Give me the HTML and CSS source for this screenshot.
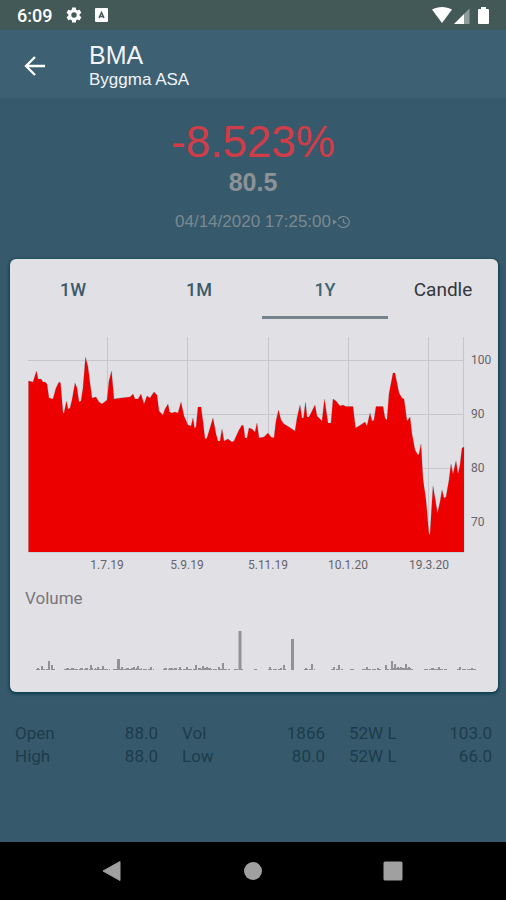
FILE: index.html
```html
<!DOCTYPE html>
<html lang="en">
<head>
<meta charset="utf-8">
<meta name="viewport" content="width=device-width, initial-scale=1">
<title>BMA</title>
<link rel="stylesheet" href="styles.css">
</head>
<body>
<div class="status">
  <div class="status-group">
    <span class="clock">6:09</span>
    <svg class="gear" width="18" height="18" viewBox="0 0 24 24" aria-hidden="true"><path fill="#fff" d="M19.4 13c.1-.3.1-.6.1-1s0-.7-.1-1l2.1-1.600c.2-.2.2-.4.1-.6l-2-3.500c-.1-.2-.4-.3-.6-.2l-2.500 1c-.5-.4-1.100-.7-1.700-1l-.4-2.600c0-.2-.2-.4-.5-.4h-4c-.2 0-.4.2-.5.4l-.4 2.600c-.6.300-1.200.6-1.700 1l-2.400-1c-.2-.1-.5 0-.6.2l-2 3.500c-.1.2-.1.500.1.6l2.100 1.600c0 .3-.1.700-.1 1s0 .700.1 1l-2.100 1.600c-.2.2-.2.400-.1.6l2 3.500c.1.200.4.300.6.2l2.500-1c.5.400 1.100.700 1.700 1l.4 2.600c0 .2.2.4.5.4h4c.2 0 .5-.2.5-.4l.4-2.600c.6-.3 1.200-.6 1.700-1l2.500 1c.2.100.5 0 .6-.2l2-3.500c.1-.2.100-.5-.1-.6zM12 15.600a3.600 3.600 0 1 1 0-7.200 3.600 3.600 0 0 1 0 7.200z"/></svg>
    <svg width="13" height="14" viewBox="0 0 13 14" aria-hidden="true"><rect width="13" height="14" rx="1" fill="#fff"/><path d="M4 10 6.500 4.500 9 10M5 8.500h3" fill="none" stroke="#435958" stroke-width="1.500"/></svg>
  </div>
  <svg width="60" height="20" viewBox="0 0 60 20" aria-hidden="true">
    <path fill="#fff" d="M1 4.500C7 1 15 1 21 4.500L11 18z"/>
    <path fill="#fff" d="M23 19 33 9v10z"/><path fill="#fff" opacity=".4" d="M33 9l5.500-5.500V19H33z"/>
    <path fill="#fff" d="M50 2h5v2h2q1 0 1 1v13q0 1-1 1h-9q-1 0-1-1V5q0-1 1-1h2z"/>
  </svg>
</div>
<header class="appbar">
  <button class="back" aria-label="Back"><svg width="22" height="22" viewBox="0 0 22 22"><path d="M21 11H2M11 2 2 11l9 9" fill="none" stroke="#fff" stroke-width="2.300"/></svg></button>
  <div>
    <h1>BMA</h1>
    <p class="company">Byggma ASA</p>
  </div>
</header>
<main>
  <section class="quote">
    <div class="change">-8.523%</div>
    <div class="price">80.5</div>
    <div class="time"><span>04/14/2020 17:25:00</span><svg width="20" height="14" viewBox="0 0 20 14" aria-hidden="true"><g fill="none" stroke="currentColor" stroke-width="1.200"><path d="M7 4.500a6 5.500 0 1 1 0 5M12.500 4v3.500l3 1.500"/></g><path fill="currentColor" d="M2 4.500 6 7 2 9.500z"/></svg></div>
  </section>
  <section class="card">
    <nav class="tabs">
      <button class="tab">1W</button>
      <button class="tab">1M</button>
      <button class="tab active">1Y</button>
      <button class="tab candle">Candle</button>
    </nav>
    <svg class="chart" viewBox="10 336 488 236" role="img" aria-label="Price over one year">
      <path d="M28 360.500H464M28 414.500H464M28 468.500H464M28 522.500H464M107.500 337V552M187.500 337V552M268.500 337V552M348.500 337V552M428.500 337V552M463.500 337V552" fill="none" stroke="#c7c7cb"/>
      <path class="area" d="M28.500 552V381L33 382 36.500 371 38 379 41 379 43 382 45 382 47 384 49 398 53 399 56 388 59 382 60.500 383 63 413 64 413 66.500 401 68 409 70 408 72 400 75 383 77 388 79 402 81 401 83 388 85.500 357 88 367 90 383 92 398 96 397 99 402 102 404 107 400 109 381 111.500 371 113 388 114 399 121 398 130 397 133 394 135 399 138 399 141 394 144 404 147 396 150 398 154 392 157 395 159 411 163 415 165 409 168 404 169.500 412 172 413 175 412 178 413 181 402 184 416 188 425 191 426 193 418 194.500 428 196 427 198 407 201 407 203 422 205 439 207 438 213 418 216 434 218 441 220 441 222 429 224 441 228 439 232 442 234 441 239 430 242 425 243.500 426 245 438 247 438 249 428 252 429 255 432 257 423 259 438 264 437 268 433 271 437 274 438 276 421 278.500 410 281 420 284 424 289 427 295 431 297 418 300 405 302 418 303.500 418 305.500 402 307 417 309 417 315 405 317 416 322 421 324.500 399 328 423 331 423 333 399 336 401 340 406 343 405 346 406.500 353 406.500 355.500 428 359 426 365 422 367 426 370 413 372 421 374 420 376 406.500 383 406.500 385 418 387 420 389 394 393 373 395 373 397 383 399 393 402 398 404 399 407 421 410 417 412 434 415 450 418 455 419 454 421 444 423 479 426 500 429 534.500 430 534 433 486 435 498 437.500 513 440 502 442 490 444 498 446 497 449 480 451 464 453 474 456 461 458 474 460 465 462 448 464 447V552Z"/>
      <g class="axis">
        <text x="471" y="364">100</text><text x="471" y="418">90</text><text x="471" y="472">80</text><text x="471" y="526">70</text>
      </g>
      <g class="axis dates">
        <text x="107" y="569">1.7.19</text><text x="187" y="569">5.9.19</text><text x="268" y="569">5.11.19</text><text x="348" y="569">10.1.20</text><text x="429" y="569">19.3.20</text>
      </g>
    </svg>
    <h2>Volume</h2>
    <svg class="chart" viewBox="10 620 488 54" role="img" aria-label="Volume">
      <g fill="none" stroke="#929296">
        <path stroke-width="3" d="M240 631V670M292.500 639V670M118.500 659V670"/>
        <path stroke-width="2" d="M38 668v2M42 666v4M49 661v9M52 665v5M91 665v5M98 667v3M103 666v4M122 667v3M128 668v2M134 667v3M138 666v4M151 667v3M172 668v2M180 667v3M187 667v3M196 665v5M203 666v4M207 667v3M219 667v3M223 663v7M270 667v3M281 668v2M284 665v5M306 668v2M312 664v6M334 667v3M339 665v5M367 667v3M378 668v2M386 665v5M392 661v9M395 664v6M398 667v3M401 667v3M406 664v6M409 667v3M439 667v3M460 667v3M472 668v2"/>
        <path d="M36 669.500H55M64 669.500H110M113 669.500H154M163 669.500H230M234 669.500H244M254 669.500H257M268 669.500H286M304 669.500H315M331 669.500H343M350 669.500H354M362 669.500H381M385 669.500H413M424 669.500H447M457 669.500H477" stroke-dasharray="4 1"/>
        <path stroke-width="2" stroke-dasharray="3 2" d="M66 669H75M80 669H96M126 669H142M164 669H180M198 669H212M431 669H436"/>
        <path stroke-width="2" d="M393 669H411"/>
      </g>
    </svg>
  </section>
  <section class="stats">
    <dl><dt>Open</dt><dd>88.0</dd><dt>High</dt><dd>88.0</dd></dl>
    <dl><dt>Vol</dt><dd>1866</dd><dt>Low</dt><dd>80.0</dd></dl>
    <dl><dt>52W L</dt><dd>103.0</dd><dt>52W L</dt><dd>66.0</dd></dl>
  </section>
</main>
<footer class="navbar">
  <button aria-label="Back"><svg width="24" height="24" viewBox="0 0 24 24"><path d="M2 12 19 2.500V21.500Z" fill="#a0a0a0" stroke="#a0a0a0" stroke-linejoin="round"/></svg></button>
  <button aria-label="Home"><svg width="24" height="24" viewBox="0 0 24 24"><circle cx="12" cy="12" r="9" fill="#a0a0a0"/></svg></button>
  <button aria-label="Recent apps"><svg width="24" height="24" viewBox="0 0 24 24"><rect x="2.500" y="2.500" width="19" height="19" rx="1.500" fill="#a0a0a0"/></svg></button>
</footer>
</body>
</html>
```
FILE: styles.css
```css
* { box-sizing: border-box; }
body {
  margin: 0;
  min-height: 100vh;
  display: flex;
  flex-direction: column;
  background: #365a6b;
  font-family: Roboto, "Liberation Sans", sans-serif;
}
h1, h2, p, dl, dt, dd { margin: 0; font-weight: 400; }
button { padding: 0; border: 0; background: none; font: inherit; display: flex; align-items: center; justify-content: center; }
svg { display: block; }

.status {
  height: 30px;
  padding: 0 15px 0 17px;
  display: flex;
  align-items: center;
  justify-content: space-between;
  background: #435958;
}
.status-group { display: flex; align-items: center; }
.clock { color: #fff; font-size: 18px; font-weight: 500; }
.gear { margin: 0 12px 0 13px; }

.appbar {
  height: 68px;
  padding: 3px 24px 0;
  display: flex;
  align-items: center;
  gap: 43px;
  background: #3d6073;
  color: #f0f4f8;
  font-family: "Liberation Sans", sans-serif;
}
h1 { font-size: 25px; line-height: 28px; }
.company { font-size: 17px; line-height: 22px; }

main { flex: 1; }
.quote {
  height: 161px;
  padding-top: 20px;
  text-align: center;
  color: #8d9297;
  font-family: "Liberation Sans", sans-serif;
}
.change { color: #d03c48; font-size: 44px; line-height: 48px; }
.price { font-size: 25px; line-height: 32px; font-weight: 700; }
.time {
  margin-top: 14px;
  padding-left: 20px;
  display: flex;
  align-items: center;
  justify-content: center;
  color: #7b8990;
  font-size: 17px;
  line-height: 20px;
}

.card {
  height: 433px;
  margin: 0 8px 0 10px;
  border-radius: 6px;
  background: #e1e0e5;
  box-shadow: 0 1px 3px 1px #0b3c4d;
}
.tabs { display: grid; grid-template-columns: repeat(3, 126px) 1fr; height: 60px; }
.tab { padding-top: 3px; color: #3d5a68; font-size: 18px; font-weight: 500; border-bottom: 3px solid transparent; }
.tab.active { border-color: #75838d; color: #3d6675; }
.tab.candle { color: #34363a; font-size: 19px; font-weight: 400; }
.chart { width: 100%; height: auto; }
.tabs + .chart { margin-top: 17px; }
.area { fill: #ed0000; stroke: #a8c8d2; stroke-width: 1px; paint-order: stroke; }
.axis { fill: #65656a; font-size: 12px; }
.dates { text-anchor: middle; }
h2 { padding-left: 15px; margin-top: 16px; margin-bottom: 12px; color: #77777c; font-size: 17px; line-height: 20px; }

.stats {
  padding: 30px 14px 0 15px;
  display: grid;
  grid-template-columns: repeat(3, 1fr);
  gap: 24px;
  color: #1c3c4b;
  font-size: 17px;
  line-height: 23px;
}
.stats dl { display: grid; grid-template-columns: auto auto; }
.stats dd { text-align: right; }

.navbar {
  height: 58px;
  padding: 0 43px;
  display: grid;
  grid-template-columns: repeat(3, 1fr);
  background: #000;
}
```
